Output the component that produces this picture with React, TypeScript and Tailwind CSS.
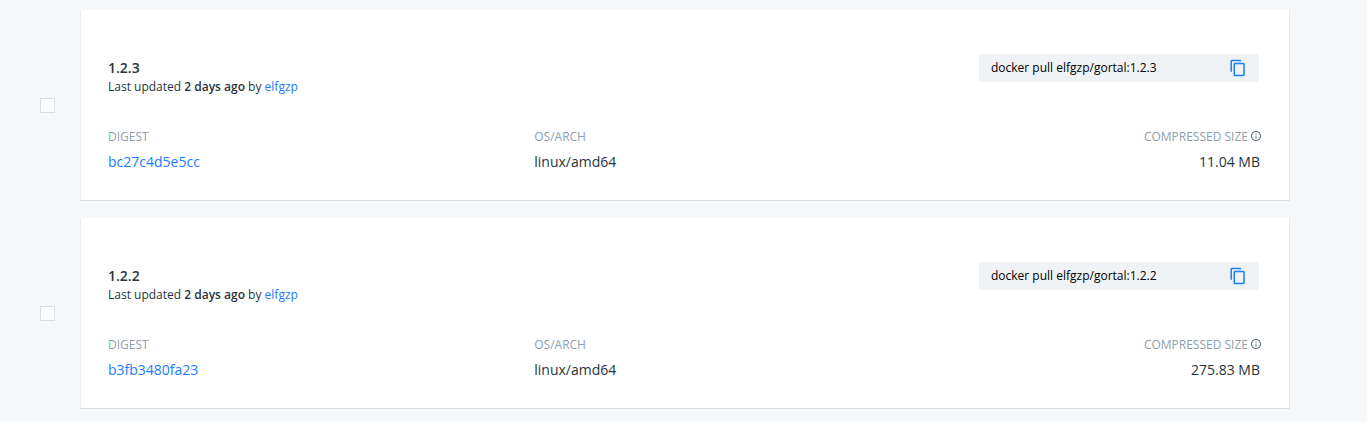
type Tag = {
  name: string;
  digest: string;
  arch: string;
  size: string;
};

const tags: Tag[] = [
  { name: '1.2.3', digest: 'bc27c4d5e5cc', arch: 'linux/amd64', size: '11.04 MB' },
  { name: '1.2.2', digest: 'b3fb3480fa23', arch: 'linux/amd64', size: '275.83 MB' },
];

function CopyIcon() {
  return (
    <svg viewBox="0 0 24 24" className="size-[18px] fill-current" aria-hidden="true">
      <path d="M16 1H4c-1.1 0-2 .9-2 2v14h2V3h12V1zm3 4H8c-1.1 0-2 .9-2 2v14c0 1.1.9 2 2 2h11c1.1 0 2-.9 2-2V7c0-1.1-.9-2-2-2zm0 16H8V7h11v14z" />
    </svg>
  );
}

function InfoIcon() {
  return (
    <svg viewBox="0 0 24 24" className="size-3 fill-current text-[#5f7482]" aria-hidden="true">
      <path d="M11 7h2v2h-2zm0 4h2v6h-2zm1-9C6.48 2 2 6.48 2 12s4.48 10 10 10 10-4.48 10-10S17.52 2 12 2zm0 18c-4.41 0-8-3.59-8-8s3.59-8 8-8 8 3.59 8 8-3.59 8-8 8z" />
    </svg>
  );
}

function TagRow({ tag }: { tag: Tag }) {
  return (
    <li className="flex items-center gap-[25px]">
      <input
        type="checkbox"
        aria-label={`Select ${tag.name}`}
        className="size-[15px] shrink-0 appearance-none border border-[#dcdfe3] bg-[#fbfcfc] checked:bg-[#1b7dfa]"
      />
      <article className="min-w-0 flex-1 border-x border-b border-x-[#e9ebee] border-b-[#dcdfe3] bg-white pt-11 pr-[29px] pb-7 pl-[27px]">
        <header className="flex items-start justify-between">
          <div className="pt-1">
            <h2 className="text-sm leading-5 font-semibold">{tag.name}</h2>
            <p className="text-xs leading-[18px]">
              Last updated <strong className="font-semibold">2 days ago</strong> by{' '}
              <a href="#elfgzp" className="text-[#1b7dfa]">elfgzp</a>
            </p>
          </div>
          <div className="mr-px flex h-7 w-[280px] items-center rounded-xs bg-[#eff3f6] px-3">
            <input
              readOnly
              aria-label={`Pull command for ${tag.name}`}
              value={`docker pull elfgzp/gortal:${tag.name}`}
              className="min-w-0 flex-1 bg-transparent text-xs text-black outline-none"
            />
            <button type="button" aria-label="Copy command" className="text-[#1b7dfa]">
              <CopyIcon />
            </button>
          </div>
        </header>
        <dl className="mt-8 grid grid-cols-[37%_1fr_auto] text-sm leading-5">
          <div>
            <dt className="mb-1.5 text-xs leading-[18px] text-[#8fa0aa]">DIGEST</dt>
            <dd><a href={`#${tag.digest}`} className="text-[#1b7dfa]">{tag.digest}</a></dd>
          </div>
          <div>
            <dt className="mb-1.5 text-xs leading-[18px] text-[#8fa0aa]">OS/ARCH</dt>
            <dd>{tag.arch}</dd>
          </div>
          <div className="text-right">
            <dt className="-mr-0.5 mb-1.5 flex items-start gap-0.5 text-xs leading-[18px] text-[#8fa0aa]">
              COMPRESSED SIZE
              <span className="pt-0.5"><InfoIcon /></span>
            </dt>
            <dd>{tag.size}</dd>
          </div>
        </dl>
      </article>
    </li>
  );
}

export default function App() {
  return (
    <main className="min-h-screen bg-[#f7f8fa] pt-2.5 pr-[77px] pb-3 pl-10 font-['Open_Sans',sans-serif] text-[#27343b]">
      <ul className="flex flex-col gap-[17px]">
        {tags.map((tag) => (
          <TagRow key={tag.name} tag={tag} />
        ))}
      </ul>
    </main>
  );
}
